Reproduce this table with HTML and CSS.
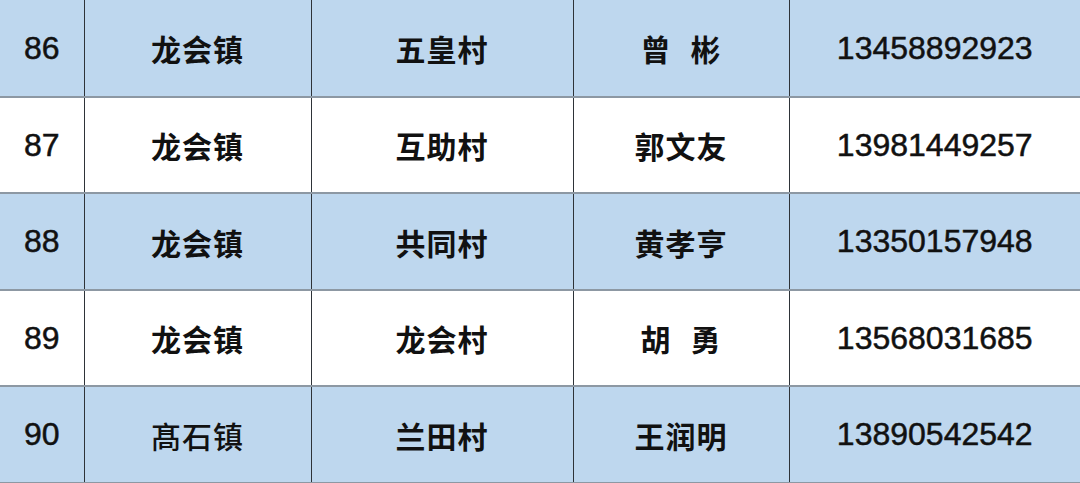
FILE: index.html
```html
<!DOCTYPE html>
<html lang="zh">
<head>
<meta charset="utf-8">
<link rel="stylesheet" href="styles.css">
</head>
<body>
<table class="grid">
  <colgroup>
    <col class="c1"><col class="c2"><col class="c3"><col class="c4"><col class="c5">
  </colgroup>
  <tr class="blue">
    <td class="num">86</td><td class="zh">龙会镇</td><td class="zh">五皇村</td><td class="zh">曾&ensp;&#8202;彬</td><td class="num">13458892923</td>
  </tr>
  <tr class="white">
    <td class="num">87</td><td class="zh">龙会镇</td><td class="zh">互助村</td><td class="zh">郭文友</td><td class="num">13981449257</td>
  </tr>
  <tr class="blue">
    <td class="num">88</td><td class="zh">龙会镇</td><td class="zh">共同村</td><td class="zh">黄孝亨</td><td class="num">13350157948</td>
  </tr>
  <tr class="white">
    <td class="num">89</td><td class="zh">龙会镇</td><td class="zh">龙会村</td><td class="zh">胡&ensp;&#8202;勇</td><td class="num">13568031685</td>
  </tr>
  <tr class="blue last">
    <td class="num">90</td><td class="zh light">髙石镇</td><td class="zh">兰田村</td><td class="zh">王润明</td><td class="num">13890542542</td>
  </tr>
</table>
</body>
</html>
```
FILE: styles.css
```css
html, body {
  margin: 0;
  padding: 0;
  background: #ffffff;
}
.grid {
  width: 1080px;
  border-collapse: collapse;
  table-layout: fixed;
}
.c1 { width: 84px; }
.c2 { width: 227px; }
.c3 { width: 262px; }
.c4 { width: 216px; }
.c5 { width: 291px; }
.grid tr { height: 97px; }
.grid tr.white { height: 96px; }
.grid td {
  padding: 0;
  text-align: center;
  vertical-align: middle;
  color: #111111;
  border-left: 1px solid #2e3338;
  border-bottom: 2px solid #8d98a3;
}
.grid td:first-child { border-left: none; }
.blue td { background: #bed7ee; }
.white td { background: #ffffff; }
.num {
  font-family: "Liberation Sans", Arial, sans-serif;
  font-size: 32px;
  padding-top: 3px;
  -webkit-text-stroke: 0.5px #111111;
}
.zh {
  font-family: "Noto Sans CJK SC", sans-serif;
  font-size: 30px;
  font-weight: 700;
  white-space: pre;
  letter-spacing: 1px;
}
.zh.light { font-weight: 500; }
```
